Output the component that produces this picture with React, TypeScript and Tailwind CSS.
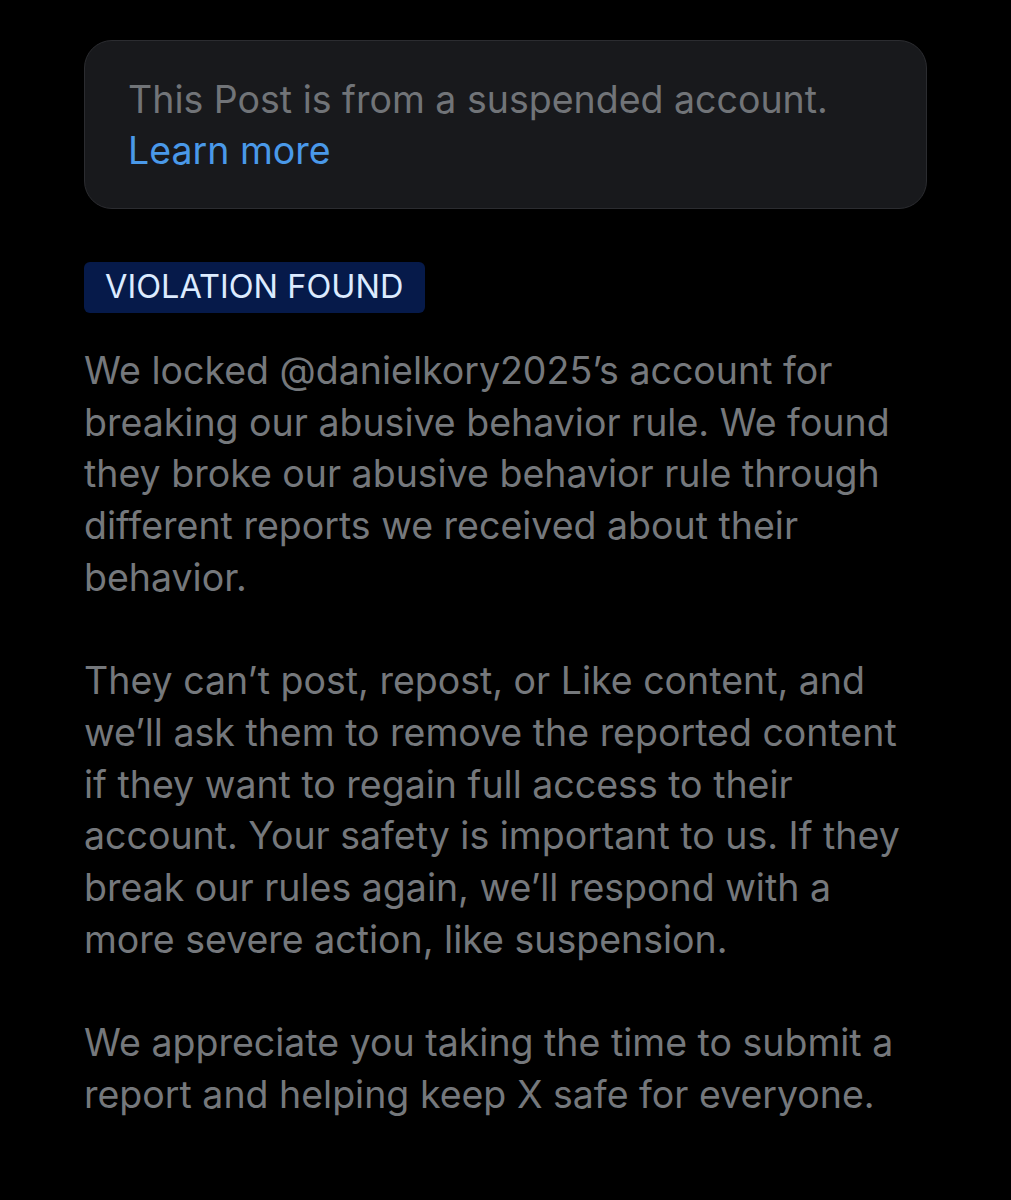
export default function App() {
  const p1 = [
    "We locked @danielkory2025’s account for",
    "breaking our abusive behavior rule. We found",
    "they broke our abusive behavior rule through",
    "different reports we received about their",
    "behavior.",
  ];
  const p2 = [
    "They can’t post, repost, or Like content, and",
    "we’ll ask them to remove the reported content",
    "if they want to regain full access to their",
    "account. Your safety is important to us. If they",
    "break our rules again, we’ll respond with a",
    "more severe action, like suspension.",
  ];
  const p3 = [
    "We appreciate you taking the time to submit a",
    "report and helping keep X safe for everyone.",
  ];

  return (
    <div className="min-h-[1200px] w-[1011px] bg-black font-['Inter',sans-serif]">
      <div className="px-[84px] pt-[40px]">
        {/* suspended notice */}
        <div className="w-[843px] rounded-[28px] border border-[#2b2c30] bg-[#18191c] pl-[43px] pt-[33px] pb-[32px] text-[37.5px] leading-[51px]">
          <div className="whitespace-nowrap text-[#717478]">This Post is from a suspended account.</div>
          <div className="text-[#4a99e9]">Learn more</div>
        </div>

        {/* badge */}
        <div className="mt-[53px] inline-flex h-[51px] items-center rounded-[6px] bg-[#061a4a] pl-[21px] pr-[22px] text-[32.5px] text-[#dcebff]">
          VIOLATION FOUND
        </div>

        {/* body */}
        <div className="mt-[32px] flex flex-col gap-[51.7px] text-[37.5px] leading-[51.7px] text-[#75787c]">
          {[p1, p2, p3].map((para, i) => (
            <p key={i}>
              {para.map((line, j) => (
                <span key={j} className="block whitespace-nowrap">
                  {line}
                </span>
              ))}
            </p>
          ))}
        </div>
      </div>
    </div>
  );
}
